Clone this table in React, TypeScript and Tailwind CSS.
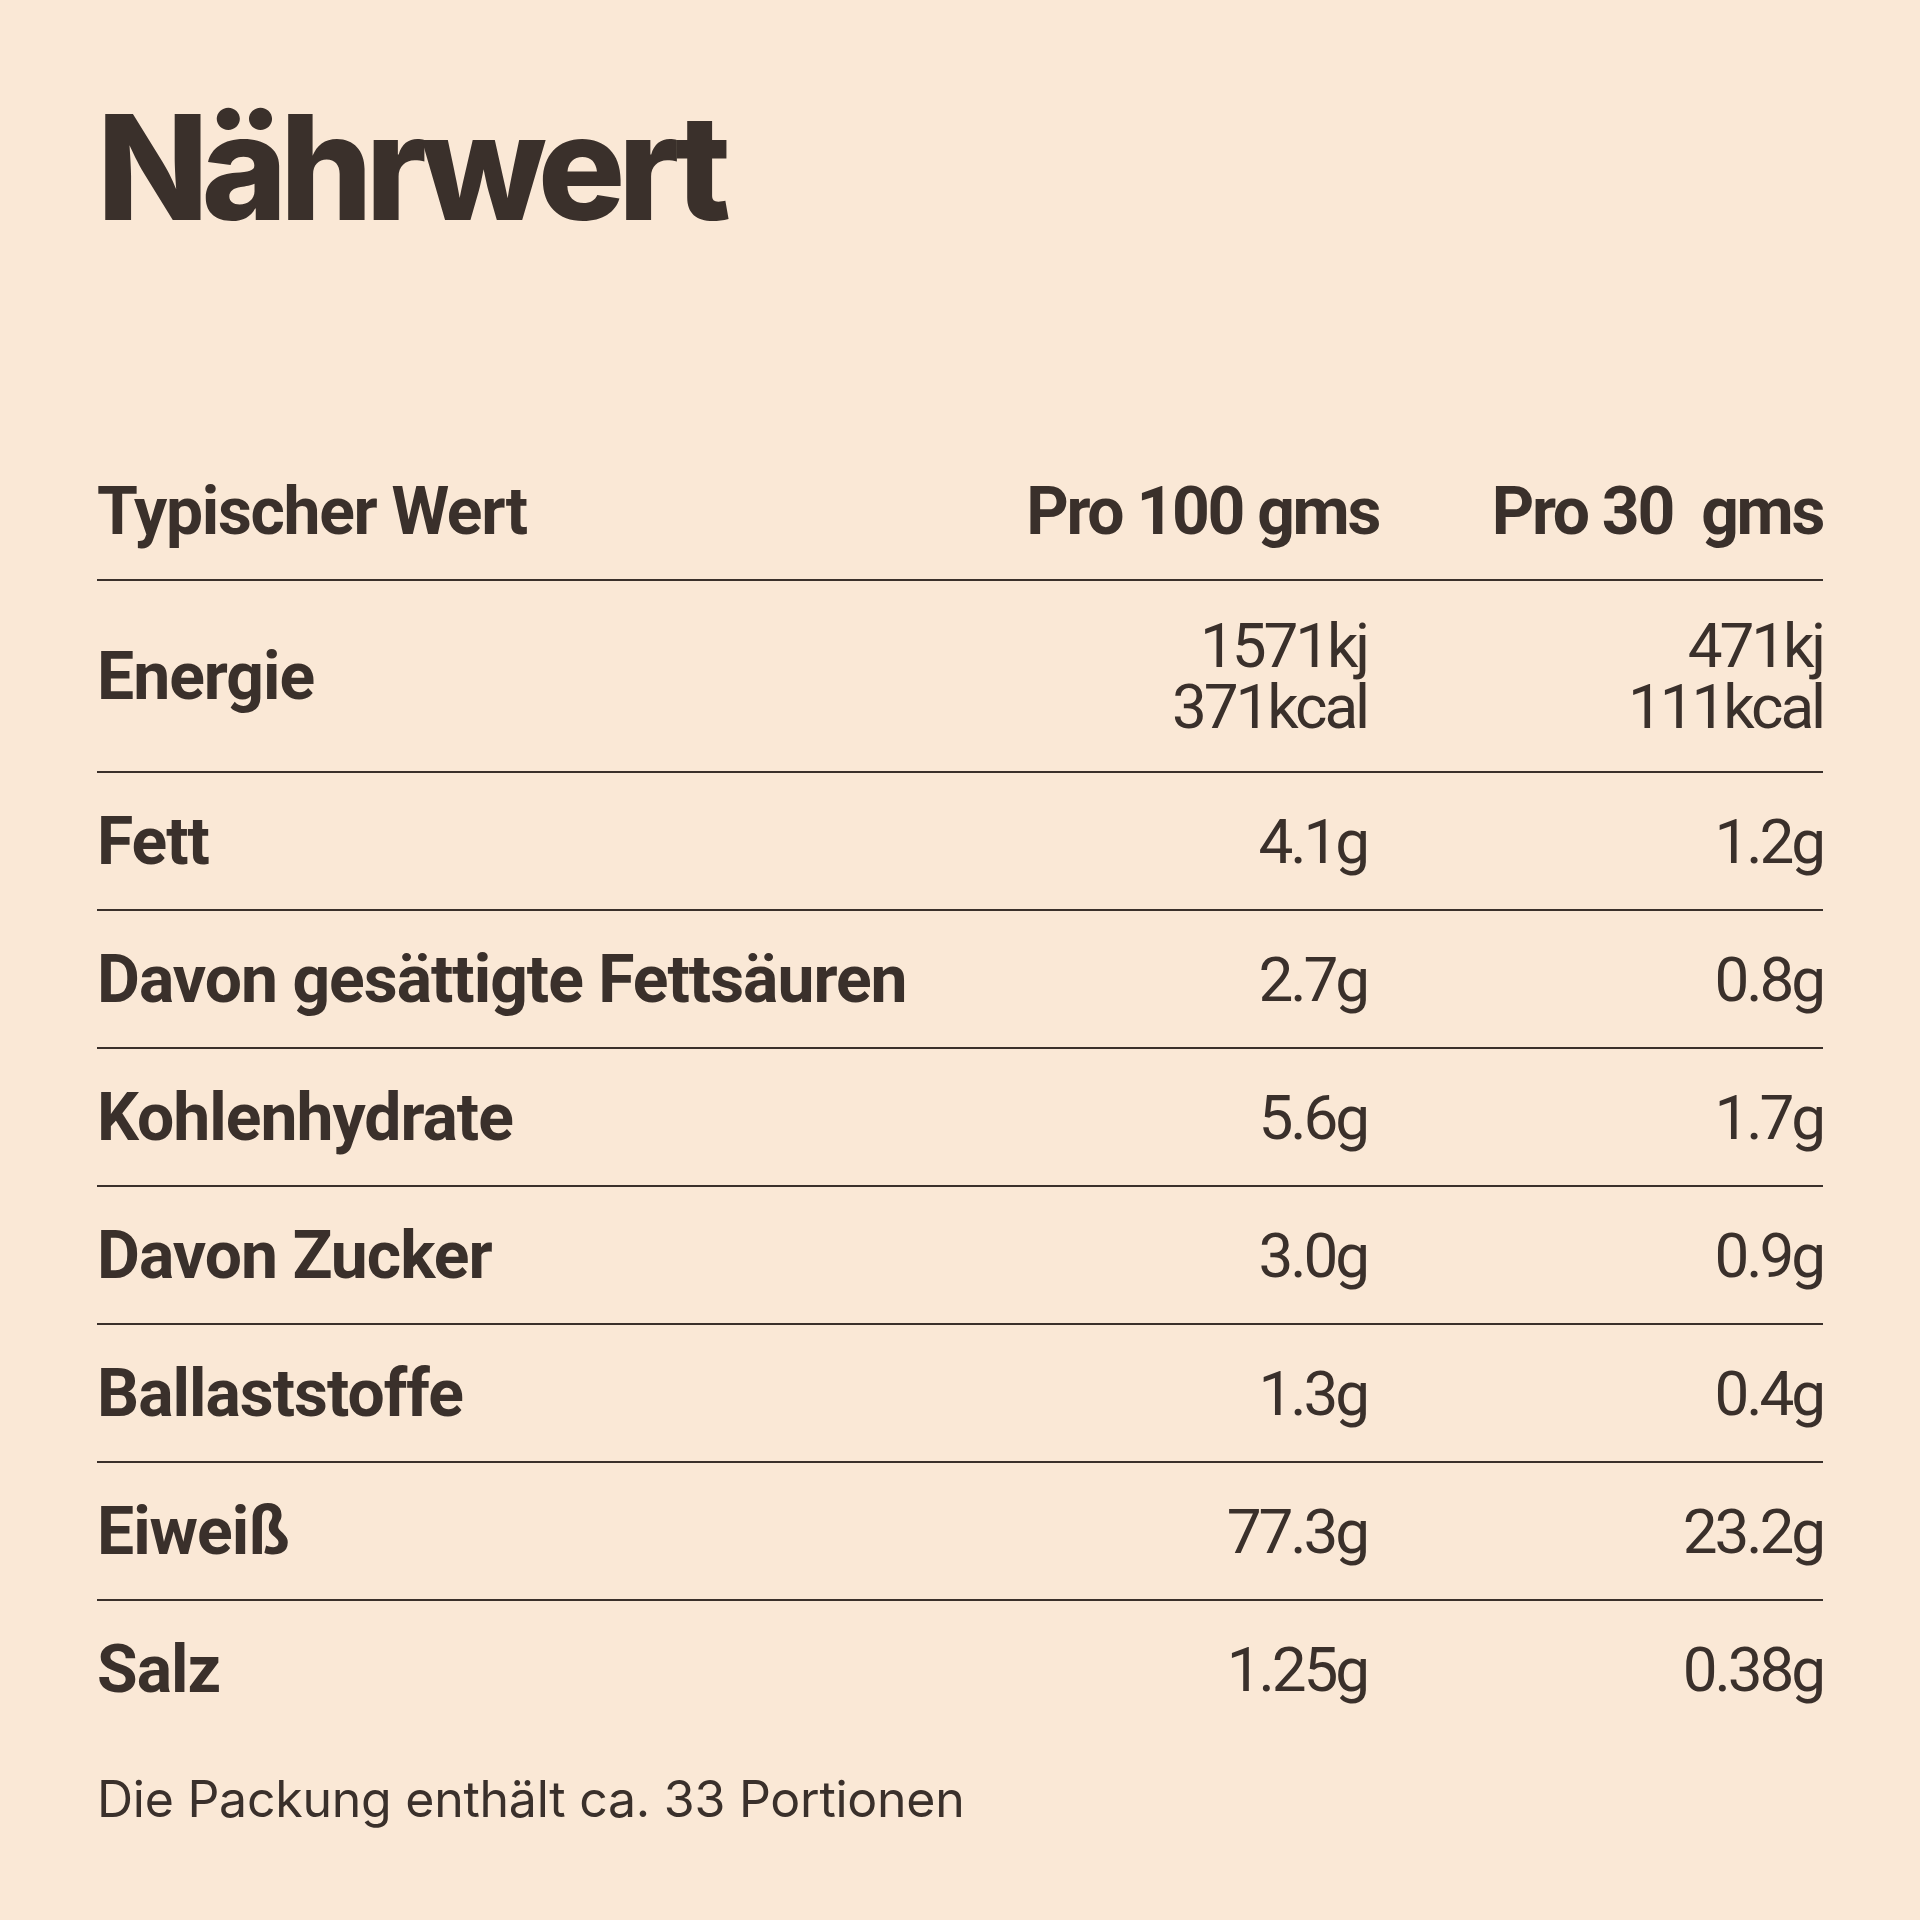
const rows = [
  { label: "Fett", per100: "4.1g", per30: "1.2g" },
  { label: "Davon gesättigte Fettsäuren", per100: "2.7g", per30: "0.8g" },
  { label: "Kohlenhydrate", per100: "5.6g", per30: "1.7g" },
  { label: "Davon Zucker", per100: "3.0g", per30: "0.9g" },
  { label: "Ballaststoffe", per100: "1.3g", per30: "0.4g" },
  { label: "Eiweiß", per100: "77.3g", per30: "23.2g" },
  { label: "Salz", per100: "1.25g", per30: "0.38g" },
];

function Label({ children }: { children: React.ReactNode }) {
  return (
    <div className="flex-1 text-[66px] font-bold tracking-[-0.015em]">
      {children}
    </div>
  );
}

function Value({ children, first }: { children: React.ReactNode; first?: boolean }) {
  return (
    <div
      className={
        first
          ? "w-[400px] pr-[12px] text-right text-[62px] font-normal tracking-[-0.05em]"
          : "w-[444px] text-right text-[62px] font-normal tracking-[-0.05em]"
      }
    >
      {children}
    </div>
  );
}

export default function App() {
  return (
    <div className="min-h-[1920px] w-[1920px] bg-[#fae8d6] px-[97px] pt-[94px] font-[Roboto,sans-serif] text-[#3a302b]">
      <h1 className="font-[Inter,sans-serif] text-[146px] font-extrabold leading-none tracking-[-0.05em]">
        Nährwert
      </h1>

      <div className="mt-[239px]">
        <div className="flex pb-[34px] text-[66px] font-bold leading-none">
          <div className="flex-1 tracking-[-0.02em]">Typischer Wert</div>
          <div className="w-[400px] text-right tracking-[-0.035em]">Pro 100 gms</div>
          <div className="w-[444px] whitespace-pre text-right tracking-[-0.035em]">Pro 30  gms</div>
        </div>

        <div className="flex h-[192px] items-center border-t-2 border-[#3a302b]">
          <Label>Energie</Label>
          <div className="w-[400px] pr-[12px] text-right text-[62px] leading-[61px] tracking-[-0.05em]">
            <div>1571kj</div>
            <div>371kcal</div>
          </div>
          <div className="w-[444px] text-right text-[62px] leading-[61px] tracking-[-0.05em]">
            <div>471kj</div>
            <div>111kcal</div>
          </div>
        </div>

        {rows.map((row) => (
          <div
            key={row.label}
            className="flex h-[138px] items-center border-t-2 border-[#3a302b]"
          >
            <Label>{row.label}</Label>
            <Value first>{row.per100}</Value>
            <Value>{row.per30}</Value>
          </div>
        ))}
      </div>

      <p className="mt-[37px] font-[Inter,sans-serif] text-[50px] leading-none tracking-[-0.005em]">
        Die Packung enthält ca. 33 Portionen
      </p>
    </div>
  );
}
